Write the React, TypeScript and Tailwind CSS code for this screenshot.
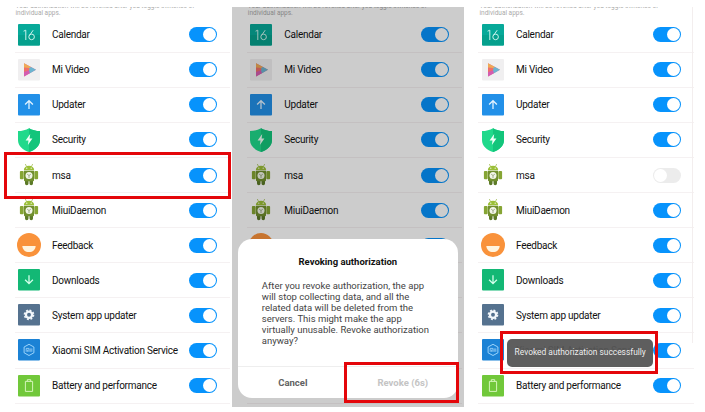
import React from "react";

type IconKind =
  | "calendar"
  | "video"
  | "updater"
  | "security"
  | "android"
  | "feedback"
  | "downloads"
  | "system"
  | "sim"
  | "battery";

interface AppEntry {
  name: string;
  icon: IconKind;
}

const apps: AppEntry[] = [
  { name: "Calendar", icon: "calendar" },
  { name: "Mi Video", icon: "video" },
  { name: "Updater", icon: "updater" },
  { name: "Security", icon: "security" },
  { name: "msa", icon: "android" },
  { name: "MiuiDaemon", icon: "android" },
  { name: "Feedback", icon: "feedback" },
  { name: "Downloads", icon: "downloads" },
  { name: "System app updater", icon: "system" },
  { name: "Xiaomi SIM Activation Service", icon: "sim" },
  { name: "Battery and performance", icon: "battery" },
];

function Tile({ fill, children }: { fill: string; children?: React.ReactNode }) {
  return (
    <>
      <rect x="1" y="1" width="22" height="21.5" rx="1" fill={fill} />
      {children}
    </>
  );
}

function AppIcon({ kind }: { kind: IconKind }) {
  return (
    <svg viewBox="0 0 24 24" className="h-6 w-6 shrink-0" fill="none">
      {kind === "calendar" && (
        <Tile fill="#07a999">
          <rect x="1" y="12" width="22" height="10.5" rx="1" fill="#05a08d" />
          <path d="M6.6 8.2 8.8 7.2V17M16.2 7.2 12.4 12.6" stroke="#c9f3ec" strokeWidth="1" />
          <circle cx="14.6" cy="13.9" r="2.8" stroke="#c9f3ec" strokeWidth="1" />
        </Tile>
      )}
      {kind === "video" && (
        <Tile fill="#f0eff0">
          <path d="M7 5.2 19 11.8 7 18.4Z" fill="#dd6f9b" />
          <path d="M7 5.2 14 9 7 14Z" fill="#efaa55" />
          <path d="M11.5 10.5 14 9 19 11.8 12.5 15.4Z" fill="#6bb5d0" />
          <path d="M7 13.5 11.5 10.5 12.8 15.2 7 18.4Z" fill="#d45cb0" />
          <path d="M7 9.5 12 10 12.5 12 7 14Z" fill="#ee7069" />
        </Tile>
      )}
      {kind === "updater" && (
        <Tile fill="#2290e8">
          <path d="M12 16V8M8.1 11.5 12 7.7 15.9 11.5" stroke="#e1f2ff" strokeWidth="1.3" />
        </Tile>
      )}
      {kind === "security" && (
        <>
          <path d="M12 .2C15 2 19 3.1 23 3.1V12C23 18 18 22 12 24 6 22 1 18 1 12V3.1C5 3.1 9 2 12 .2Z" fill="#20d98b" />
          <path d="M12 .2C15 2 19 3.1 23 3.1V12C23 18 18 22 12 24Z" fill="#13c57b" />
          <path d="M13.2 6 8.6 12.5H11.5L10.9 17 15.4 10.5H12.6Z" fill="#effff7" />
        </>
      )}
      {kind === "android" && (
        <>
          <path d="M8.3 1 9.6 3.6M15.7 1 14.4 3.6" stroke="#a4bf5a" strokeWidth=".8" />
          <path d="M6.8 7.2C7 4.4 9 2.8 12 2.8S17 4.4 17.2 7.2Z" fill="#9bbf38" />
          <circle cx="9.8" cy="5.2" r=".6" fill="#fff" />
          <circle cx="14.2" cy="5.2" r=".6" fill="#fff" />
          <rect x="2.9" y="8" width="3.8" height="8.2" rx="1" fill="#86a534" />
          <rect x="17.3" y="8" width="3.8" height="8.2" rx="1" fill="#86a534" />
          <path d="M8 16H11.5V20.4A1.6 1.6 0 0 1 8 20.4ZM12.5 16H16V20.4A1.6 1.6 0 0 1 12.5 20.4Z" fill="#5c7a27" />
          <path d="M7 7.7H17V17.2Q17 18.2 16 18.2H8Q7 18.2 7 17.2Z" fill="#718f2e" />
          <circle cx="12" cy="12.6" r="3.5" fill="#f2f5e9" />
          <path d="M10.2 11.2 12 12.5 13.8 11.2M12 12.5V15" stroke="#8b9b70" strokeWidth=".8" />
        </>
      )}
      {kind === "feedback" && (
        <>
          <circle cx="12" cy="12" r="12" fill="#f9923b" />
          <path d="M5.3 12.9H18.7C18.4 16.6 15.8 19.1 12 19.1S5.6 16.6 5.3 12.9Z" fill="#fff4df" />
        </>
      )}
      {kind === "downloads" && (
        <Tile fill="#13b875">
          <path d="M12 7.3V15.3M8.1 11.8 12 15.6 15.9 11.8" stroke="#d3ffea" strokeWidth="1.3" />
        </Tile>
      )}
      {kind === "system" && (
        <Tile fill="#55728f">
          <circle cx="12" cy="11.8" r="3.1" stroke="#f4f8fb" strokeWidth="2.3" />
          <circle cx="12" cy="11.8" r="4.6" stroke="#f4f8fb" strokeWidth="1.5" strokeDasharray="1.9 1.71" />
        </Tile>
      )}
      {kind === "sim" && (
        <Tile fill="#1b82d5">
          <path d="M12 6.3 16.9 9V14.8L12 17.5 7.1 14.8V9Z" stroke="#a8dcff" strokeWidth=".9" />
          <path d="M9.2 13.8V10.4H11.9V13.8M10.6 11.7V13.8M13.2 10.4V13.8M14.8 10.4V13.8" stroke="#b9e3ff" strokeWidth=".7" />
        </Tile>
      )}
      {kind === "battery" && (
        <Tile fill="#71c83a">
          <path d="M8.4 7.4H15.6V17.4H8.4ZM10.3 7.2V5.7H13.7V7.2" stroke="#d4f5b9" strokeWidth="1" />
        </Tile>
      )}
    </svg>
  );
}

function Toggle({ on }: { on: boolean }) {
  return (
    <div
      className={`flex h-[15px] w-7 shrink-0 items-center rounded-full p-px ${
        on ? "justify-end bg-[#0793fc]" : "justify-start bg-[#ececec]"
      }`}
    >
      <div className="h-[13px] w-[13px] rounded-full bg-white" />
    </div>
  );
}

function AppRow({ app, on }: { app: AppEntry; on: boolean }) {
  return (
    <div className="flex h-[35.1px] items-center border-b border-[#f5f1f2] pl-[2.5px] pr-[13.4px]">
      <AppIcon kind={app.icon} />
      <span className="ml-[11px] flex-1 whitespace-nowrap pt-px text-[10px] leading-4 tracking-[-0.25px] text-[#111]">
        {app.name}
      </span>
      <Toggle on={on} />
    </div>
  );
}

function AppList({ revoked = false }: { revoked?: boolean }) {
  return (
    <div className="h-full w-[230px] overflow-hidden pl-[14.5px]">
      <p className="-mt-[4px] h-[14.6px] whitespace-nowrap pl-px text-[6.5px] leading-[7px] text-[#aaa]">
        Your authorization will be revoked after you toggle switches of
        <br />
        individual apps.
      </p>
      {apps.map((app) => (
        <AppRow key={app.name} app={app} on={!(revoked && app.name === "msa")} />
      ))}
    </div>
  );
}

function RevokeDialog() {
  return (
    <div className="absolute left-[5.5px] top-[232px] flex h-[159px] w-[220px] flex-col rounded-[14px] bg-white">
      <h2 className="mt-[16px] text-center text-[9.5px] font-bold leading-[14px] text-[#111]">Revoking authorization</h2>
      <p className="ml-[24px] mt-[11px] whitespace-nowrap text-[9.5px] leading-[11.1px] text-[#444]">
        After you revoke authorization, the app
        <br />
        will stop collecting data, and all the
        <br />
        related data will be deleted from the
        <br />
        servers. This might make the app
        <br />
        virtually unusable. Revoke authorization
        <br />
        anyway?
      </p>
      <div className="mt-auto grid h-8 grid-cols-2 items-center border-t border-[#eeeeee] pt-px text-center text-[9.5px] font-bold">
        <span className="text-[#626262]">Cancel</span>
        <span className="text-[#c4c4c4]">Revoke (6s)</span>
      </div>
    </div>
  );
}

export default function App() {
  return (
    <main className="h-[412px] w-[705px] overflow-hidden bg-white pt-[7px] font-['Roboto',sans-serif]">
      <div className="flex h-[400px]">
        <section className="relative w-[232.3px] shrink-0">
          <AppList />
          <div className="absolute left-[4px] top-[144.5px] h-[47px] w-[227px] border-[3px] border-[#e4060a]" />
        </section>
        <section className="relative w-[231.7px] shrink-0">
          <AppList />
          <div className="absolute inset-0 bg-black/20" />
          <RevokeDialog />
          <div className="absolute left-[112px] top-[355px] h-[41px] w-[115px] border-[3px] border-[#e4060a]" />
        </section>
        <section className="relative w-[229px] shrink-0">
          <AppList revoked />
          <div className="absolute right-0 top-0 h-[336px] w-px bg-[#f3eeee]" />
          <div className="absolute left-[36.5px] top-[324px] h-[43px] w-[158px] border-[3px] border-[#e4060a]" />
          <div className="absolute left-[43px] top-[332px] flex h-[27.5px] w-[146.5px] items-center justify-center whitespace-nowrap rounded-[5px] bg-[#555]/95 text-[8.4px] text-[#eee]">
            Revoked authorization successfully
          </div>
        </section>
      </div>
    </main>
  );
}
